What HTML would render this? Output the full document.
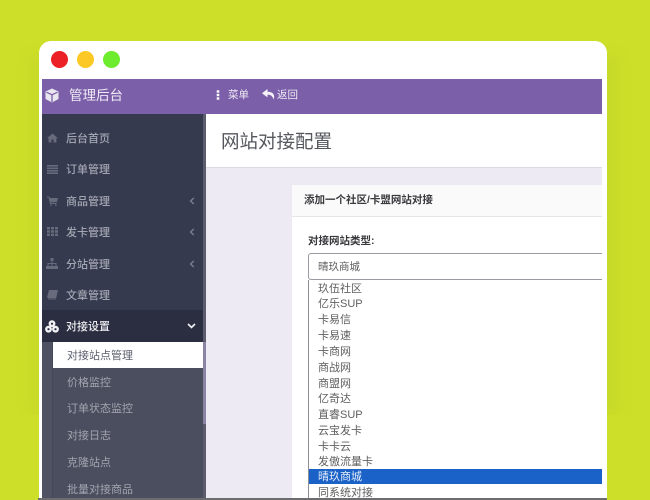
<!DOCTYPE html>
<html lang="zh-CN">
<head>
<meta charset="utf-8">
<title>网站对接配置</title>
<style>
html,body{margin:0;padding:0;width:650px;height:500px;overflow:hidden;background:#cddf29;}
body{position:relative;font-family:"Liberation Sans","Noto Sans CJK SC",sans-serif;}
div,span,svg{position:absolute;box-sizing:border-box;}
#w{left:0;top:0;width:650px;height:500px;filter:blur(.35px);overflow:hidden;}
.t{white-space:nowrap;line-height:16px;}
.m{left:66px;font-size:11px;color:#a3a5b1;font-weight:500;}
.s{left:67px;font-size:11px;color:#a2a4af;}
.o{left:318px;font-size:11px;color:#5f5f5f;line-height:16px;white-space:nowrap;}
.dot{width:17px;height:17px;border-radius:50%;top:51px;}
</style>
</head>
<body>
<div id="w">
<!-- shadow behind window -->
<div style="left:28px;top:55px;width:592px;height:360px;background:#c8da28;filter:blur(5px);"></div>
<div style="left:0;top:415px;width:650px;height:85px;background:#cddf29;"></div>
<!-- window -->
<div style="left:39px;top:41px;width:568px;height:459px;background:#fff;border-radius:12px 12px 0 0;"></div>
<div class="dot" style="left:51px;background:#ec2027;"></div>
<div class="dot" style="left:77px;background:#fcc825;"></div>
<div class="dot" style="left:103px;background:#6cec2c;"></div>

<!-- top bar -->
<div style="left:42px;top:79px;width:560px;height:35px;background:#7b5fa8;"></div>
<svg style="left:45px;top:88px" width="14" height="15" viewBox="0 0 14 15"><path d="M7 .5 13.5 3.5V11L7 14.5.5 11V3.5Z" fill="#e9e6f0"/><path d="M1.5 4.2 7 6.8 12.5 4.2M7 6.8V14" stroke="#7b5fa8" stroke-width="1.3" fill="none"/></svg>
<div class="t" style="left:69px;top:88px;font-size:13.5px;color:#efeaf5;">管理后台</div>
<svg style="left:216px;top:90px" width="4" height="10" viewBox="0 0 4 10"><rect x=".7" y=".3" width="2.6" height="2.4" fill="#fff"/><rect x=".7" y="3.8" width="2.6" height="2.4" fill="#fff"/><rect x=".7" y="7.3" width="2.6" height="2.4" fill="#fff"/></svg>
<div class="t" style="left:228px;top:87px;font-size:10.5px;color:#efeaf5;">菜单</div>
<svg style="left:262px;top:89px" width="13" height="11" viewBox="0 0 13 11"><path d="M5.5 0 0 4.2 5.5 8.4V5.6C8.5 5.6 10.5 6.8 11.5 10.5 13.5 6 11 2.8 5.5 2.8Z" fill="#f4f1f8"/></svg>
<div class="t" style="left:277px;top:87px;font-size:10.5px;color:#efeaf5;">返回</div>

<!-- sidebar -->
<div style="left:42px;top:114px;width:161px;height:384px;background:#363a4f;"></div>
<div style="left:203px;top:114px;width:3px;height:384px;background:#5b5c6e;"></div>
<div style="left:203px;top:342px;width:3px;height:82px;background:#8b83a3;"></div>
<div style="left:42px;top:310px;width:161px;height:32px;background:#2b2e41;"></div>
<div style="left:42px;top:342px;width:161px;height:156px;background:#4b4e5f;"></div>
<div style="left:42px;top:342px;width:11px;height:156px;background:#4f5263;border-right:1px solid #45485a;"></div>
<div style="left:53px;top:342px;width:150px;height:26px;background:#fff;"></div>

<svg style="left:47px;top:133px" width="11" height="10" viewBox="0 0 11 10"><path d="M5.5 .5 0 5.2H1.6V9.5H4.4V6.5H6.6V9.5H9.4V5.2H11Z" fill="#686b7c"/></svg>
<svg style="left:47px;top:165px" width="11" height="9" viewBox="0 0 11 9"><path d="M0 0H11V1.6H0ZM0 2.5H11V4.1H0ZM0 5H11V6.6H0ZM0 7.4H11V9H0Z" fill="#686b7c"/></svg>
<svg style="left:47px;top:196px" width="11" height="10" viewBox="0 0 11 10"><path d="M0 .5H2.2L2.7 2H11L9.8 6.2H3.6L3.8 7H9.6V8H3L1.6 1.5H0Z" fill="#686b7c"/><circle cx="4" cy="9.2" r=".8" fill="#686b7c"/><circle cx="8.8" cy="9.2" r=".8" fill="#686b7c"/></svg>
<svg style="left:47px;top:227px" width="11" height="9" viewBox="0 0 11 9"><path d="M0 0H3V2.4H0ZM4 0H7V2.4H4ZM8 0H11V2.4H8ZM0 3.3H3V5.7H0ZM4 3.3H7V5.7H4ZM8 3.3H11V5.7H8ZM0 6.6H3V9H0ZM4 6.6H7V9H4ZM8 6.6H11V9H8Z" fill="#686b7c"/></svg>
<svg style="left:46px;top:258px" width="12" height="11" viewBox="0 0 12 11"><path d="M4.5 0H7.5V3H6.5V5H10.5V8H12V11H8V8H9.5V6H6.5V8H8V11H4V8H5.5V6H2.5V8H4V11H0V8H1.5V5H5.5V3H4.5Z" fill="#686b7c"/></svg>
<svg style="left:47px;top:290px" width="11" height="10" viewBox="0 0 11 10"><path d="M2 0H11L9.2 8H1.2C.4 8 0 7.4.2 6.6Z" fill="#686b7c"/><path d="M1 8.9H9" stroke="#686b7c" stroke-width="1"/></svg>
<svg style="left:45px;top:320px" width="14" height="13" viewBox="0 0 14 13"><circle cx="7" cy="3.7" r="3.4" fill="#f2f2f5"/><circle cx="3.5" cy="9.2" r="3.4" fill="#f2f2f5"/><circle cx="10.5" cy="9.2" r="3.4" fill="#f2f2f5"/><circle cx="7" cy="3.7" r="1.1" fill="#2b2e41"/><circle cx="3.5" cy="9.2" r="1.1" fill="#2b2e41"/><circle cx="10.5" cy="9.2" r="1.1" fill="#2b2e41"/></svg>

<div class="t m" style="top:131px;">后台首页</div>
<div class="t m" style="top:162px;">订单管理</div>
<div class="t m" style="top:194px;">商品管理</div>
<div class="t m" style="top:225px;">发卡管理</div>
<div class="t m" style="top:257px;">分站管理</div>
<div class="t m" style="top:288px;">文章管理</div>
<div class="t m" style="top:319px;color:#ececf0;">对接设置</div>

<svg style="left:189px;top:197px" width="6" height="8" viewBox="0 0 6 8"><path d="M4.8 1 1.6 4 4.8 7" stroke="#7c7f8e" stroke-width="1.4" fill="none"/></svg>
<svg style="left:189px;top:228px" width="6" height="8" viewBox="0 0 6 8"><path d="M4.8 1 1.6 4 4.8 7" stroke="#7c7f8e" stroke-width="1.4" fill="none"/></svg>
<svg style="left:189px;top:260px" width="6" height="8" viewBox="0 0 6 8"><path d="M4.8 1 1.6 4 4.8 7" stroke="#7c7f8e" stroke-width="1.4" fill="none"/></svg>
<svg style="left:187px;top:323px" width="9" height="6" viewBox="0 0 9 6"><path d="M1 1 4.5 4.4 8 1" stroke="#eee" stroke-width="1.7" fill="none"/></svg>

<div class="t s" style="top:348px;color:#5a5d6b;">对接站点管理</div>
<div class="t s" style="top:375px;">价格监控</div>
<div class="t s" style="top:401px;">订单状态监控</div>
<div class="t s" style="top:428px;">对接日志</div>
<div class="t s" style="top:455px;">克隆站点</div>
<div class="t s" style="top:482px;">批量对接商品</div>

<!-- content -->
<div style="left:206px;top:114px;width:396px;height:384px;background:#eeeaf4;"></div>
<div style="left:206px;top:114px;width:396px;height:54px;background:#fff;border-bottom:1px solid #dcdae0;"></div>
<div class="t" style="left:221px;top:128px;font-size:18.5px;line-height:27px;color:#55575d;">网站对接配置</div>

<!-- panel -->
<div style="left:292px;top:185px;width:310px;height:313px;background:#fff;"></div>
<div style="left:292px;top:185px;width:310px;height:32px;background:#fafafb;border-bottom:1px solid #e6e6e8;"></div>
<div class="t" style="left:304px;top:192px;font-size:10.5px;color:#3a3a3e;font-weight:700;">添加一个社区/卡盟网站对接</div>
<div class="t" style="left:308px;top:233px;font-size:10.5px;color:#3a3a3e;font-weight:700;">对接网站类型:</div>
<div style="left:308px;top:253px;width:294px;height:27px;background:#fff;border:1px solid #9b9aa3;border-right:0;border-radius:3px 0 0 3px;"></div>
<div class="t" style="left:318px;top:259px;font-size:10.5px;color:#5f5f5f;">晴玖商城</div>

<!-- dropdown -->
<div style="left:308px;top:280px;width:299px;height:218px;background:#fff;border-left:1px solid #8e8e94;"></div>
<div style="left:309px;top:469px;width:293px;height:15px;background:#1a62c8;"></div>
<div class="o" style="top:281px;">玖伍社区</div>
<div class="o" style="top:296px;">亿乐SUP</div>
<div class="o" style="top:312px;">卡易信</div>
<div class="o" style="top:328px;">卡易速</div>
<div class="o" style="top:344px;">卡商网</div>
<div class="o" style="top:360px;">商战网</div>
<div class="o" style="top:376px;">商盟网</div>
<div class="o" style="top:391px;">亿奇达</div>
<div class="o" style="top:407px;">直睿SUP</div>
<div class="o" style="top:423px;">云宝发卡</div>
<div class="o" style="top:439px;">卡卡云</div>
<div class="o" style="top:454px;">发傲流量卡</div>
<div class="o" style="top:469px;color:#e6eefa;">晴玖商城</div>
<div class="o" style="top:485px;">同系统对接</div>

<!-- bottom edge -->
<div style="left:38px;top:498px;width:569px;height:2px;background:#6d6d70;"></div>
</div>
</body>
</html>
